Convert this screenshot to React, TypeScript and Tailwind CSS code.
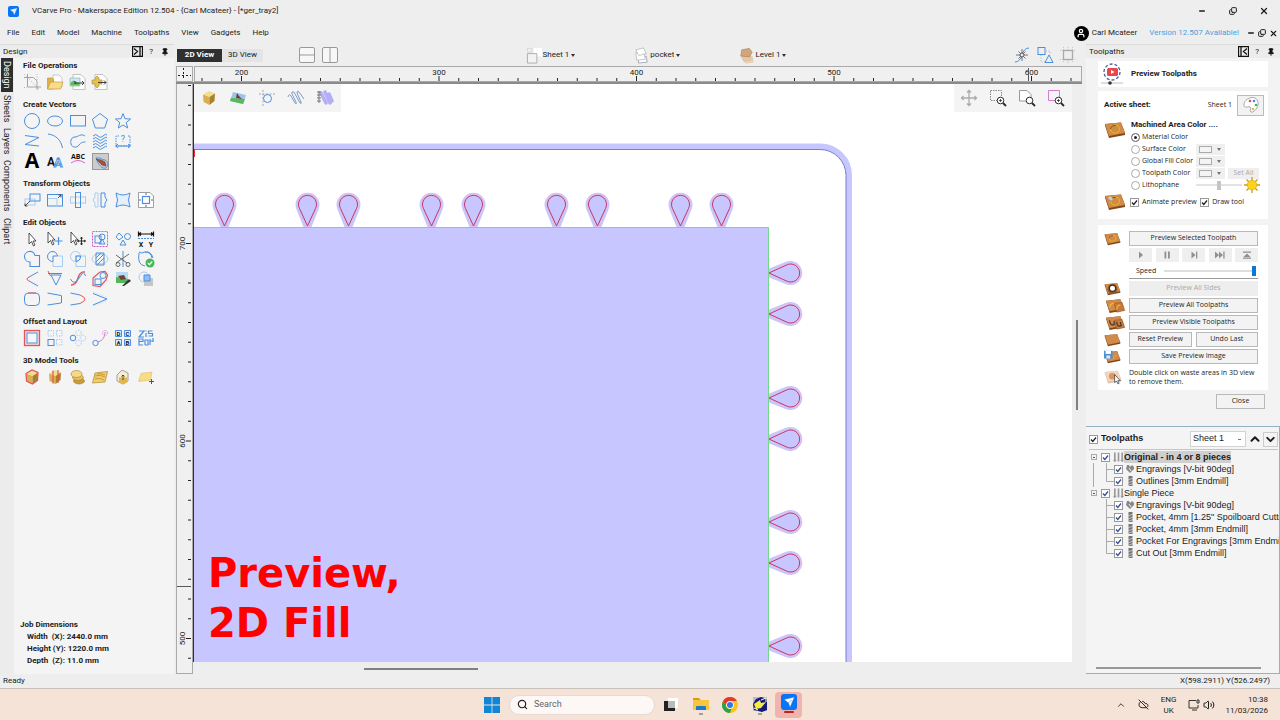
import type { ReactNode } from "react";
import { ChevronDown, ChevronUp, CloudOff, Copy, Minus, Pin, Search, User, Volume2, X } from "lucide-react";

const BLUE = "#4a8fdf";
const PALE = "#a9ccf2";
const RED = "#e0555a";
const PINK = "#d07fd4";
const INK = "#2b2b2b";
const GREY = "#9a9a9a";

type GlyphProps = { children: ReactNode; size?: string; box?: string };

function Glyph({ children, size = "size-[18px]", box = "0 0 18 18" }: GlyphProps) {
  return (
    <svg viewBox={box} className={`${size} shrink-0`} fill="none" stroke={BLUE} strokeWidth="1" aria-hidden="true">
      {children}
    </svg>
  );
}

type Tool = { label: string; art: ReactNode; active?: boolean };
type ToolGroup = { title: string; tools: Tool[] };

const sheet = <path d="M4 1.5h8l4 4v11H4z" fill="#fdfdfd" stroke="#b5b5b5" strokeWidth=".8" />;

const goldCube = (
  <g stroke="none">
    <path d="M3 5.5 9 2l6 2.5L9.500 8z" fill="#f7dc8e" />
    <path d="M3 5.500 9.500 8v8L3.500 13z" fill="#d9b04e" />
    <path d="M9.500 8 15 4.500l-.5 7.500-5 4z" fill="#a9802c" />
  </g>
);

const groups: ToolGroup[] = [
  {
    title: "File Operations",
    tools: [
      {
        label: "Job setup",
        art: (
          <g stroke={GREY}>
            <path d="M4.500 1v13H18M1 4.500h9.500l3.500 3.500v9" strokeWidth=".9" />
            <path d="M1 14.500h3M14 1v6M1 1l16 16" strokeDasharray="1 1.500" strokeWidth=".7" />
          </g>
        ),
      },
      {
        label: "Open file",
        art: (
          <g stroke="#c39a3c" strokeWidth=".7">
            <path d="M7 2h6l3 3v9H7z" fill="#fff" stroke="#b5b5b5" />
            <path d="M1.500 5h5l1 1.500V16h-6z" fill="#e0b14a" />
            <path d="m1.500 16 3-7h12.500l-2.500 7z" fill="#f9dc8a" />
          </g>
        ),
      },
      {
        label: "Import vectors",
        art: (
          <g>
            {sheet}
            <path d="M1 5h10v8H1z" fill="#cfe6f8" stroke="#8fb8a0" strokeWidth=".7" />
            <path d="M1.500 12.500v-3l3-2 6 3v2z" fill="#63b860" stroke="none" />
            <path d="M6 10h9M13 8l2 2-2 2M6 8v3" stroke={INK} strokeWidth=".9" />
          </g>
        ),
      },
      {
        label: "Export vectors",
        art: (
          <g>
            {sheet}
            <path d="M6 3 8 5v2h3v4H8v2l-2 2-2-2v-2H1V7h3V5z" fill="#e6c04e" stroke="#b8963a" strokeWidth=".7" />
            <path d="M7 9.500h8M13 7.500l2 2-2 2" stroke={INK} strokeWidth=".9" />
          </g>
        ),
      },
    ],
  },
  {
    title: "Create Vectors",
    tools: [
      { label: "Circle", art: <circle cx="9" cy="9" r="7.500" /> },
      { label: "Ellipse", art: <ellipse cx="9" cy="9" rx="7.500" ry="5" /> },
      { label: "Rectangle", art: <rect x="1.500" y="3.500" width="15" height="10.500" /> },
      { label: "Polygon", art: <path d="m9 1.500 7.500 5.700-2.800 8.800H4.300L1.500 7.200z" /> },
      { label: "Star", art: <path d="m9 1.500 2 5.200 5.600.3-4.400 3.500 1.500 5.500L9 13l-4.700 3 1.500-5.500L1.400 7 7 6.700z" /> },
      { label: "", art: null },
      { label: "Polyline", art: <path d="M2 3.500 16 5.500 2 12.500l14 1.500" /> },
      { label: "Arc", art: <path d="M2 2c8 1 13 6 14.500 14" /> },
      { label: "Curve", art: <path d="M16 4C12 1 9 5 6 5S1 8 2 12s6 4 8 1 5-3 6.500-3" /> },
      {
        label: "Texture",
        art: (
          <path d="M2 4q3-3 5 0t5 0 4-1M2 7q3-3 5 0t5 0 4-1M2 10q3-3 5 0t5 0 4-1M2 13q3-3 5 0t5 0 4-1M2 16q3-3 5 0t5 0 4-1" />
        ),
      },
      {
        label: "Dimension",
        art: (
          <g>
            <path d="M5 4H2v10h14V4h-3" strokeDasharray="1.500 1" />
            <path d="M2 14h14M4 12l-2.500 2L4 16M14 12l2.500 2-2.500 2" />
            <text x="9" y="10" textAnchor="middle" className="text-[9px]" fill={BLUE} stroke="none">?</text>
          </g>
        ),
      },
      { label: "", art: null },
      {
        label: "Text",
        art: <text x="9" y="16" textAnchor="middle" className="font-['Open_Sans',sans-serif] text-[21px] font-bold" fill="#000" stroke="none">A</text>,
      },
      {
        label: "Auto layout text",
        art: (
          <g className="font-bold">
            <text x="5" y="14" textAnchor="middle" className="text-[12px]" fill="#111" stroke="none">A</text>
            <text x="12" y="15" textAnchor="middle" className="text-[13px]" fill="#d8e9fb" strokeWidth=".8">A</text>
          </g>
        ),
      },
      {
        label: "Text on curve",
        art: (
          <g>
            <text x="9" y="7" textAnchor="middle" className="font-['Open_Sans',sans-serif] text-[7px] font-bold" fill="#111" stroke="none">ABC</text>
            <path d="M2 11q7-5 14 0" stroke="#dd62ca" />
          </g>
        ),
      },
      {
        label: "Trace bitmap",
        active: true,
        art: (
          <g>
            <path d="M3 4c4-1 6 2 9 2 4 2 3 6 1 8-5 1-6-3-8-5z" strokeWidth=".9" />
            <path d="m3 5 5 1 4 2 1 4-4-1z" fill="#a8503c" stroke="#6b3a30" strokeWidth=".6" />
          </g>
        ),
      },
    ],
  },
  {
    title: "Transform Objects",
    tools: [
      {
        label: "Move",
        art: (
          <g>
            <rect x="2" y="8" width="10" height="6" stroke={PALE} />
            <rect x="7" y="3" width="10" height="7" />
            <path d="m2 15 5-5M2 12.500V15h2.500" stroke={INK} strokeWidth=".8" />
          </g>
        ),
      },
      {
        label: "Scale",
        art: (
          <g>
            <rect x="1.500" y="3.500" width="15" height="11.500" />
            <path d="M2 7.500h9V15" stroke={PALE} />
            <path d="m12 7 3-3M12.500 4H15v2.500" stroke={INK} strokeWidth=".8" />
          </g>
        ),
      },
      {
        label: "Rotate",
        art: (
          <g>
            <rect x="1.500" y="6" width="15" height="6" stroke={PALE} />
            <rect x="6.500" y="1.500" width="5" height="15" />
          </g>
        ),
      },
      {
        label: "Mirror",
        art: (
          <g>
            <path d="M7 2H4v4L2 9l2 3v4h3z" stroke={PALE} />
            <path d="M10 2h4v4l2 3-2 3v4h-4z" />
          </g>
        ),
      },
      { label: "Distort", art: <path d="M2 2q7 4 14 0-3 7 0 14-7-4-14 0 3-7 0-14z" fill="#e3effb" /> },
      {
        label: "Align",
        art: (
          <g>
            <path d="M1.500 1.500H13l3.500 3.500v11.500h-15z" fill="#fff" stroke="#888" strokeWidth=".8" />
            <rect x="5.500" y="5.500" width="7" height="7" strokeWidth="1.200" />
            <path d="M9 2v2M9 14v2M2 9h2M14 9h2" stroke="#666" />
          </g>
        ),
      },
    ],
  },
  {
    title: "Edit Objects",
    tools: [
      { label: "Select", art: <path d="M6 3v11l2.500-2.500L10.500 16l1.500-1-2-4h3z" fill="#fff" stroke={INK} strokeWidth=".8" /> },
      {
        label: "Node edit",
        art: (
          <g>
            <path d="M2 2v11l2.500-2.500L6.500 15 8 14l-2-4h3z" fill="#fff" stroke={INK} strokeWidth=".8" />
            <path d="M12.500 7v8M8.500 11h8" strokeWidth="1.200" />
          </g>
        ),
      },
      {
        label: "Interactive select",
        art: (
          <g stroke={INK}>
            <path d="M2 2v11l2.500-2.500L6.500 15 8 14l-2-4h3z" fill="#fff" strokeWidth=".8" />
            <path d="M12.500 7v8M8.500 11h8M11.500 8.500l1-1.500 1 1.500M11.500 13.500l1 1.500 1-1.500M10 10l-1.500 1 1.500 1M15 10l1.500 1-1.500 1" />
          </g>
        ),
      },
      {
        label: "Group",
        art: (
          <g>
            <rect x="1.500" y="1.500" width="15" height="15" stroke="#d15cc8" strokeDasharray="2 1" />
            <rect x="4" y="6" width="6" height="7" />
            <circle cx="11" cy="7" r="3" />
            <path d="m11 9 3 5H8z" />
          </g>
        ),
      },
      {
        label: "Ungroup",
        art: (
          <g>
            <path d="m5 3 4 4-4 3-3-3z" />
            <circle cx="13.500" cy="6.500" r="3" />
            <path d="m9 10 3 5H6z" />
          </g>
        ),
      },
      {
        label: "Measure",
        art: (
          <g>
            <path d="M1.500 1.500v5M16.500 1.500v5M2 4h14M4 2.500 2 4l2 1.500M14 2.500 16 4l-2 1.500" stroke="#111" strokeWidth="1.200" />
            <path d="M1 8.500h16" strokeDasharray="2 1" />
            <text x="4" y="16.500" textAnchor="middle" className="text-[7px] font-bold" fill="#111" stroke="none">X</text>
            <text x="14" y="16.500" textAnchor="middle" className="text-[7px] font-bold" fill="#111" stroke="none">Y</text>
          </g>
        ),
      },
      { label: "Weld", art: <path d="M7 12a5.300 5.300 0 1 1 5-6.500h4.500v11H7z" strokeWidth="1.100" /> },
      {
        label: "Subtract",
        art: (
          <g>
            <path d="M7 11.500a5 5 0 1 1 4.500-5.500H7z" />
            <path d="M12 6h4.500v10.500H7v-5" stroke={PALE} />
          </g>
        ),
      },
      {
        label: "Overlap",
        art: (
          <g>
            <circle cx="6.500" cy="6.500" r="5" stroke={PALE} />
            <rect x="7" y="6" width="9.500" height="10.500" stroke={PALE} />
            <path d="M7 6h4.500q0 5-4.500 5.500z" />
          </g>
        ),
      },
      {
        label: "Trim",
        art: (
          <g>
            <ellipse cx="9" cy="9" rx="8" ry="5" stroke={PALE} />
            <path d="M5 3h8v12H5zM5 8l5-5M5 12l8-8M6 15l7-7" />
          </g>
        ),
      },
      {
        label: "Scissors",
        art: (
          <g>
            <path d="M9 1v16" />
            <path d="M2 5l11 8M2 13 15 4" stroke="#666" />
            <circle cx="14" cy="14.500" r="2" stroke="#666" />
            <circle cx="4" cy="14.500" r="2" stroke="#666" />
          </g>
        ),
      },
      {
        label: "Validate vectors",
        art: (
          <g>
            <path d="M2 2q2 2 6 0 6 0 7 6M2 3q-2 12 6 13M8 2q6-1 8 6" />
            <circle cx="13" cy="13" r="4.500" fill="#46b85c" stroke="none" />
            <path d="m10.800 13 1.700 1.700 2.800-3.200" stroke="#fff" strokeWidth="1.200" />
          </g>
        ),
      },
      {
        label: "Fillet",
        art: (
          <g>
            <path d="M15 2 7 6.500M15 16l-8-4.500" />
            <path d="M7 6.500Q1 9 7 11.500" stroke={RED} />
          </g>
        ),
      },
      {
        label: "Extend",
        art: (
          <g>
            <path d="m5 5 5 10 5-10z" />
            <path d="M2 3.500h14M2 1l2.500 5" stroke={RED} />
          </g>
        ),
      },
      {
        label: "Join curve",
        art: (
          <g>
            <path d="M2 15q5 0 7-7t7-6" stroke={RED} strokeWidth="1.400" />
            <path d="M1.500 9q3 6 7 1t5-7 3 3" />
          </g>
        ),
      },
      {
        label: "Boundary",
        art: (
          <g>
            <path d="M2 8 9 2l5-.5L16.500 5 15 10l-6 6.500-7-1z" stroke={RED} strokeWidth="1.200" />
            <rect x="4" y="9" width="6" height="5.500" />
            <circle cx="12" cy="5.500" r="3" />
          </g>
        ),
      },
      {
        label: "Edit picture",
        art: (
          <g stroke="none">
            <path d="M2 2h12v10H2z" fill="#b6dcf5" />
            <path d="M2 7l12 2v4H2z" fill="#51b757" />
            <path d="m4 6 6-1 2 4-5 1z" fill="#6d4334" />
            <path d="m8 16 7-7 2 2-7 5z" fill="#333" />
          </g>
        ),
      },
      {
        label: "Crop picture",
        art: (
          <g>
            <rect x="7" y="8" width="9" height="8" fill="#c6c6c6" stroke="none" />
            <circle cx="7" cy="7" r="5" stroke={PALE} />
            <path d="M7 5h6v6H7z" fill="#8ec0f3" />
          </g>
        ),
      },
      {
        label: "Rounded corners",
        art: (
          <g>
            <rect x="1.500" y="3" width="15" height="12.500" rx="4" />
            <path d="M5 3h8" stroke={RED} />
          </g>
        ),
      },
      {
        label: "Close with line",
        art: (
          <g>
            <path d="M1.500 3 15 5.500M1.500 15 15 13" />
            <path d="M15.500 5.500V13" stroke={RED} />
          </g>
        ),
      },
      {
        label: "Close with curve",
        art: (
          <g>
            <path d="M1.500 3 11 5M1.500 15 11 13.500" />
            <path d="M11 5q10 4 0 8.500" stroke={RED} />
          </g>
        ),
      },
      {
        label: "Join vectors",
        art: (
          <g>
            <path d="M2 3.500 16 9 2 15" />
            <path d="M2 2l14 5M2 16l14-5" stroke={PALE} strokeDasharray="1 1.500" strokeWidth=".7" />
          </g>
        ),
      },
    ],
  },
  {
    title: "Offset and Layout",
    tools: [
      {
        label: "Offset",
        art: (
          <g>
            <rect x="1.500" y="1.500" width="15" height="15" fill="#f6dcdc" stroke={RED} strokeWidth="1.300" />
            <rect x="4" y="4" width="10" height="10" fill="#f4f7fc" />
          </g>
        ),
      },
      {
        label: "Array copy",
        art: (
          <g>
            <rect x="2" y="10.500" width="6" height="6" />
            <path d="M2 1.500h5.500V7H2zM10.500 1.500H16V7h-5.500zM10.500 10.500H16V16h-5.500z" stroke={PALE} strokeDasharray="1.500 1" />
          </g>
        ),
      },
      {
        label: "Circular copy",
        art: (
          <g>
            <circle cx="4" cy="9" r="2.800" />
            <g stroke={PALE} strokeDasharray="1.500 1">
              <circle cx="9.500" cy="4" r="2.800" />
              <circle cx="14" cy="9" r="2.800" />
              <circle cx="9.500" cy="14" r="2.800" />
            </g>
          </g>
        ),
      },
      {
        label: "Copy along vectors",
        art: (
          <g>
            <circle cx="4.500" cy="14" r="2.700" />
            <path d="M7 13q7-2 7-10" stroke={PINK} />
            <circle cx="14" cy="4" r="2.500" stroke={PINK} strokeDasharray="1 1" />
          </g>
        ),
      },
      {
        label: "Plate layout",
        art: (
          <g>
            <path d="M1.500 1.500h6v6h-6zM10.500 1.500h6v6h-6zM1.500 10.500h6v6h-6zM10.500 10.500h6v6h-6z" fill="#dcecfb" />
            <g className="text-[6px] font-bold" fill="#222" stroke="none" textAnchor="middle">
              <text x="4.500" y="6.700">D</text>
              <text x="13.500" y="6.700">C</text>
              <text x="4.500" y="15.700">A</text>
              <text x="13.500" y="15.700">B</text>
            </g>
          </g>
        ),
      },
      {
        label: "Nesting",
        art: (
          <path
            strokeWidth="1.200"
            d="M2 2h5L2 8h5M9 4v4M9 1.500v1M15.500 2h-4v2.500h4V7h-4M2 12.500h4V10H2v6h4M8 16v-5h3v5h-3M13 10v6M13 12h3M16 9v4"
          />
        ),
      },
    ],
  },
  {
    title: "3D Model Tools",
    tools: [
      { label: "Create shape", art: <g>{goldCube}<path d="M3 5.500 9 2l6 2.500-.5 8-5 3.500-6-3z" stroke={RED} strokeWidth="1.200" /></g> },
      { label: "Two rail sweep", art: <g>{goldCube}<path d="M7 2.500v13M12 2v13" stroke={RED} strokeWidth="1.200" /></g> },
      {
        label: "Extrude and weave",
        art: (
          <g stroke="#a37c2c" strokeWidth=".6" fill="#e5bf5b">
            <ellipse cx="10" cy="13" rx="5.500" ry="3" fill="#c89b3c" />
            <ellipse cx="9" cy="9.500" rx="5.500" ry="3" />
            <ellipse cx="7.500" cy="6" rx="5.500" ry="3.500" fill="#f5d988" />
          </g>
        ),
      },
      {
        label: "Texture area",
        art: <path d="M4 5 16.500 3.500 14 14 1.500 15zM4 8q5-2 10 1M4 11q5-2 9 1M6 6q4-1 8 1" fill="#f2cd68" stroke="#ad8531" strokeWidth=".7" />,
      },
      {
        label: "Import model",
        art: (
          <g stroke="#8f8f8f" strokeWidth=".8">
            <path d="M3 7 8 2l6 3v8l-5 3-6-3z" fill="#f6edcf" />
            <path d="M5 9.500h8v5l-4 2-4-2z" fill="#e0b64f" stroke="none" />
            <path d="M9 7v5M7.500 8.500 9 7l1.500 1.500" stroke={INK} />
          </g>
        ),
      },
      {
        label: "Zero plane",
        art: (
          <g>
            <path d="M4 5.500 15 4l-1.500 8L1.500 13.500z" fill="#f8dd88" stroke="#e0bb58" strokeWidth=".6" />
            <path d="M14.500 11v5M12 13.500h5" stroke="#555" />
          </g>
        ),
      },
    ],
  },
];

const canvasTools: Tool[] = [
  { label: "Toggle model", art: goldCube },
  {
    label: "Toggle bitmaps",
    art: (
      <g stroke="none">
        <path d="M4 3 17 6l-3 9L1 12z" fill="#9dc4ec" />
        <path d="m2 9 14 1-2 5-13-3z" fill="#55bb58" />
        <path d="m8 4 2 3 3 3-6-1z" fill="#713b37" />
      </g>
    ),
  },
  {
    label: "Toggle guides",
    art: (
      <g>
        <path d="M1 5h16M5 1v16" stroke="#888" strokeDasharray="2 1.500" strokeWidth=".7" />
        <circle cx="9.500" cy="9.500" r="4" />
      </g>
    ),
  },
  {
    label: "Toggle toolpaths",
    art: <path d="M1 8q1-4 3-1l4 7q2 2 1-1L5 5q-1-3 2-2l6 11q2 1 1-1L10 4q0-3 2-1l5 7" stroke="#7f9cc4" />,
  },
  {
    label: "Toggle solid toolpaths",
    art: (
      <g>
        <path d="M5 4l5 10M9 3l5 11M13 5l3 7" stroke="#b3aef5" strokeWidth="3.500" strokeLinecap="round" />
        <path d="M3 2v12M1 3h4M1 6h4M1 9h4M1 12h4" stroke="#777" />
      </g>
    ),
  },
];

const lens = (
  <g stroke={INK}>
    <circle cx="11.500" cy="11.500" r="3.300" fill="#fff" />
    <path d="m14 14 3 3" strokeWidth="1.800" />
  </g>
);

const zoomTools: Tool[] = [
  {
    label: "Pan",
    art: <path d="M9 1.500v15M1.500 9h15M7 3.500l2-2 2 2M7 14.500l2 2 2-2M3.500 7l-2 2 2 2M14.500 7l2 2-2 2" stroke="#ababab" strokeWidth="1.300" />,
  },
  { label: "Zoom to selection", art: <g><path d="M1.500 1.500h11v10h-11z" stroke="#888" strokeDasharray="1.500 1" />{lens}<path d="M10 11.500h3M11.500 10v3" stroke={INK} strokeWidth=".8" /></g> },
  { label: "Zoom to page", art: <g><path d="M1.500 1.500H9l4 4v6.500H1.500z" fill="#fff" stroke="#999" />{lens}</g> },
  { label: "Zoom to box", art: <g><path d="M1.500 1.500h11v10h-11z" stroke="#d57ccf" />{lens}<path d="M10 11.500h3M11.500 10v3" stroke={INK} strokeWidth=".8" /></g> },
];

const snapTools: Tool[] = [
  { label: "Snap to vectors", art: <g><path d="M2 16q5 0 7-7t7-7" /><path d="M9 3v12M3 9h12M5.500 5.500l7 7M12.500 5.500l-7 7" stroke="#555" strokeWidth=".8" /><circle cx="9" cy="9" r="2" fill="#eee" stroke="#555" /></g> },
  { label: "Smart snapping", art: <g><rect x="2" y="1.500" width="7" height="7" /><path d="m13 9 4 7.500H9z" /><path d="M5 9v7h4M10 5h4v4" stroke="#999" strokeDasharray="1 1.500" strokeWidth=".7" /></g> },
  { label: "Snap to grid", art: <g stroke="#aaa"><rect x="4.500" y="4.500" width="9" height="9" strokeWidth="1.300" /><path d="M1 4.500h16M1 13.500h16M4.500 1v16M13.500 1v16M9 1v3M9 14v3" strokeDasharray="1 1" strokeWidth=".6" /></g> },
];

function ToolButton({ tool, className = "" }: { tool: Tool; className?: string }) {
  return (
    <button aria-label={tool.label} title={tool.label} className={`grid place-items-center ${className}`}>
      <Glyph>{tool.art}</Glyph>
    </button>
  );
}

function AppMark({ className }: { className: string }) {
  return (
    <svg viewBox="0 0 16 16" className={className} aria-hidden="true">
      <rect width="16" height="16" rx="3" fill="#0b74f5" />
      <path d="M3 5.500 13.500 3 9 13.500 7.500 9zM7.500 9l3-3" fill="#fff" stroke="#0b74f5" strokeWidth=".5" />
    </svg>
  );
}

function TitleBar() {
  return (
    <header className="flex h-[22px] shrink-0 items-center pl-2 pr-2">
      <AppMark className="size-[11px]" />
      <h1 className="ml-[13px] text-[8px]">VCarve Pro - Makerspace Edition 12.504 - {"{Carl Mcateer}"} - [*ger_tray2]</h1>
      <div className="ml-auto flex items-center gap-[15px]">
        <button aria-label="Minimize" className="grid w-4 place-items-center"><Minus className="size-2" strokeWidth={4} /></button>
        <button aria-label="Restore" className="grid w-4 place-items-center"><Copy className="size-2 -scale-x-100 rotate-180" strokeWidth={3} /></button>
        <button aria-label="Close window" className="grid w-4 place-items-center"><X className="size-[10px]" strokeWidth={3} /></button>
      </div>
    </header>
  );
}

const menus = ["File", "Edit", "Model", "Machine", "Toolpaths", "View", "Gadgets", "Help"];

function MenuBar() {
  return (
    <div className="flex h-[22px] shrink-0 items-center pl-[7px] pr-[2px] text-[8px]">
      <nav className="flex gap-3" aria-label="Main menu">
        {menus.map((m) => <button key={m}>{m}</button>)}
      </nav>
      <span className="ml-auto grid size-[15px] place-items-center rounded-full bg-black text-white">
        <User className="size-[10px]" strokeWidth={3} />
      </span>
      <span className="ml-[3px]">Carl Mcateer</span>
      <a href="#update" className="ml-3 text-[#4a9fdc]">Version 12.507 Available!</a>
      <div className="ml-2 flex items-center gap-[3px]">
        <button aria-label="Minimize document"><Minus className="size-2" strokeWidth={4} /></button>
        <button aria-label="Restore document"><Copy className="size-2 -scale-x-100 rotate-180" strokeWidth={3} /></button>
        <button aria-label="Close document"><X className="size-[9px]" strokeWidth={3} /></button>
      </div>
    </div>
  );
}

function PanelHeader({ title, flip }: { title: string; flip?: boolean }) {
  return (
    <div className="flex h-[14px] shrink-0 items-center border-t border-[#dcdcdc] bg-[#ececec] pl-[3px] pr-[5px] text-[8px]">
      <h2>{title}</h2>
      <button aria-label={`Dock ${title}`} className="ml-auto">
        <Glyph size={flip ? "size-[11px] -scale-x-100" : "size-[11px]"} box="0 0 11 11">
          <path d="M.5.500h10v10H.5zM8 1v9M2 2.500l3.500 3L2 8.500" stroke="#111" strokeWidth="1.300" />
        </Glyph>
      </button>
      <button aria-label={`Help for ${title}`} className="ml-[6px]">?</button>
      <button aria-label={`Pin ${title}`} className="ml-2"><Pin className="size-2" strokeWidth={3} fill="#111" /></button>
    </div>
  );
}

const sideTabs = ["Design", "Sheets", "Layers", "Components", "Clipart"];

function DesignPanel() {
  return (
    <aside className="flex w-[174px] shrink-0 flex-col bg-[#f4f4f4]">
      <PanelHeader title="Design" />
      <div className="flex flex-1">
        <div className="flex w-[14px] shrink-0 flex-col items-center bg-[#ececec]" role="tablist">
          {sideTabs.map((t, i) => (
            <button
              key={t}
              role="tab"
              aria-selected={i === 0}
              className="grid w-3 shrink-0 place-items-center py-[3px] aria-selected:bg-[#2f2f2f] aria-selected:text-white"
            >
              <span className="block text-[9px] leading-3 [writing-mode:vertical-rl]">{t}</span>
            </button>
          ))}
        </div>
        <div className="flex flex-1 flex-col pb-[7px] pt-[1px]">
          {groups.map((g) => (
            <section key={g.title} className="mb-[6px] pl-[7px]">
              <h3 className="pl-[2px] text-[8px] font-bold leading-[13px]">{g.title}</h3>
              <div className="grid w-[136px] grid-cols-6">
                {g.tools.map((t, i) =>
                  t.art ? (
                    <span key={t.label} className="grid h-5 place-items-center">
                      <ToolButton tool={t} className={t.active ? "size-[17px] border border-[#999] bg-[#ccc]" : ""} />
                    </span>
                  ) : (
                    <span key={`gap-${i}`} />
                  ),
                )}
              </div>
            </section>
          ))}
          <dl className="mt-auto pl-[13px] text-[8px] font-bold leading-3">
            <dt className="-ml-[7px]">Job Dimensions</dt>
            <dd>Width&nbsp; (X): 2440.0 mm</dd>
            <dd>Height (Y): 1220.0 mm</dd>
            <dd>Depth&nbsp; (Z): 11.0 mm</dd>
          </dl>
        </div>
      </div>
    </aside>
  );
}

function MiniSelect({ label, value, icon }: { label: string; value: string; icon: ReactNode }) {
  return (
    <label className="flex items-center">
      <Glyph size="size-[17px]">{icon}</Glyph>
      <select aria-label={label} className="field-sizing-content appearance-none bg-transparent text-[8px]">
        <option>{value}</option>
      </select>
      <svg viewBox="0 0 4 3" className="ml-[2px] h-[3px] w-1" aria-hidden="true"><path d="M0 0h4L2 3z" fill="#333" /></svg>
    </label>
  );
}

function ViewBar() {
  return (
    <div className="flex h-[22px] items-center pl-[1px] text-[8px]">
      <button className="h-[13px] w-[45px] bg-[#303030] font-bold text-white">2D View</button>
      <button className="h-[13px] w-[41px] bg-[#e4e4e4]">3D View</button>
      <div className="ml-[35px] flex gap-[5px]">
        <button aria-label="Split horizontally">
          <Glyph><path d="M1.500 3q0-1.500 1.500-1.500h12q1.500 0 1.500 1.500v12q0 1.500-1.500 1.500H3q-1.500 0-1.500-1.500zM1.500 9h15" fill="#f7f7f7" stroke="#999" /></Glyph>
        </button>
        <button aria-label="Split vertically">
          <Glyph><path d="M1.500 3q0-1.500 1.500-1.500h12q1.500 0 1.500 1.500v12q0 1.500-1.500 1.500H3q-1.500 0-1.500-1.500zM9 1.500v15" fill="#f7f7f7" stroke="#999" /></Glyph>
        </button>
      </div>
      <div className="flex grow items-center justify-center gap-[58px]">
        <MiniSelect label="Sheet" value="Sheet 1" icon={<g><path d="M8 1h9v9H8z" fill="#fff" stroke="none" /><path d="M1.500 1.500h5v4h-5z" stroke="#ccc" strokeWidth=".6" /><path d="M1.500 7h10v10h-10z" fill="#f3f3f3" stroke="#aaa" /></g>} />
        <MiniSelect label="Layer" value="pocket" icon={<g stroke="#aaa" strokeWidth=".7"><path d="m5 9 9 1 1 6-9 1z" fill="#fff" stroke="#7c8aa0" /><path d="m3 6 9 1 1 6-9 1z" fill="#fff" /><path d="m3 3 8-2 3 6-8 2z" fill="#fff" /></g>} />
        <MiniSelect label="Level" value="Level 1" icon={<g stroke="#a9825b" strokeWidth=".7"><path d="m5 11 10-1 1 6-8 1z" fill="#ecd8c2" stroke="#dcc0a0" /><path d="m3 9 10-1 1 6-8 1z" fill="#e6c8a8" stroke="#dcb890" /><path d="M4 3 12 1.500l3 4-3 5-9-1z" fill="#d2a679" /></g>} />
      </div>
      <div className="flex gap-[5px] pl-[40px] pr-[5px]">
        {snapTools.map((t) => <ToolButton key={t.label} tool={t} />)}
      </div>
    </div>
  );
}

const STEP = 19.75;

function TopRuler() {
  const ticks = Array.from({ length: 45 }, (_, i) => i - 2);
  return (
    <svg className="h-full w-full" aria-hidden="true">
      {ticks.map((i) => (
        <path key={i} d={`M${46.5 + i * STEP} ${i % 10 === 0 ? 9 : 11}V14`} stroke="#222" />
      ))}
      {[200, 300, 400, 500, 600].map((n, i) => (
        <text key={n} x={46.5 + i * 10 * STEP} y="8" textAnchor="middle" className="text-[8px]" fill="#222">{n}</text>
      ))}
      <path d="M833.500 1V14" stroke="#555" />
    </svg>
  );
}

function SideRuler() {
  const ticks = Array.from({ length: 30 }, (_, i) => i - 8);
  return (
    <svg className="h-full w-full" aria-hidden="true">
      {ticks.map((i) => (
        <path key={i} d={`M${i % 10 === 0 ? 9 : 11} ${159.5 + i * STEP}H14`} stroke="#222" />
      ))}
      {[700, 600, 500].map((n, i) => {
        const y = 159.5 + i * 10 * STEP;
        return (
          <text key={n} x="8" y={y} transform={`rotate(-90 8 ${y})`} textAnchor="middle" className="text-[8px]" fill="#222">{n}</text>
        );
      })}
      <path d="M0 502.500H14" stroke="#555" />
    </svg>
  );
}

const topPegs = [30, 113, 154, 237, 279, 362, 403, 486, 527];
const rightPegs = [189, 230, 314, 355, 438, 479, 562];

function Peg({ x, y, turn }: { x: number; y: number; turn: number }) {
  return (
    <g transform={`translate(${x} ${y}) rotate(${turn})`}>
      <path d="M-4 0-11.200-18A12 12 0 1 1 11.200-18L4 0z" fill="#c8c6ff" />
      <path d="M0-1-7.800-18.500A9 9 0 1 1 7.800-18.500z" fill="none" stroke="#dcbfec" strokeWidth="3" />
      <path d="M0-1-8-18.500A9 9 0 1 1 8-18.500z" fill="#c8c6ff" stroke="#c03a68" strokeWidth="1" />
    </g>
  );
}

function Canvas() {
  return (
    <div className="relative min-w-0 flex-1 overflow-hidden border-l border-[#2d2d45] bg-white">
      <svg className="absolute inset-0 h-full w-full" role="img" aria-label="Tray drawing">
        <path d="M0 62.500H626A29 29 0 0 1 655 91.500V2000" fill="none" stroke="#c8c6ff" strokeWidth="6" />
        <path d="M0 65.500H626A26 26 0 0 1 652 91.500V2000" fill="none" stroke="#7480cf" />
        {topPegs.map((x) => <Peg key={x} x={x + 0.5} y={143} turn={0} />)}
        {rightPegs.map((y) => <Peg key={y} x={574} y={y} turn={90} />)}
        <path d="M-5 143.500H574.500V2000H-5z" fill="#c8c6ff" stroke="#74d98c" />
        <path d="M0 65v8" stroke="#d33" strokeWidth="2" />
      </svg>
      <div className="absolute left-0 top-0 flex h-7 items-center gap-[11px] bg-[#f4f4f4] pl-[6px] pr-[7px]">
        {canvasTools.map((t) => <ToolButton key={t.label} tool={t} />)}
      </div>
      <div className="absolute right-0 top-0 flex h-7 items-center gap-[11px] bg-[#f4f4f4] pl-[6px] pr-[7px]">
        {zoomTools.map((t) => <ToolButton key={t.label} tool={t} />)}
      </div>
      <p className="absolute bottom-[14px] left-[14px] font-['DejaVu_Sans',sans-serif] text-[40px] font-bold leading-[50px] text-[#ff0000]">
        Preview,
        <br />
        2D Fill
      </p>
    </div>
  );
}

function Workspace() {
  return (
    <main className="flex min-w-0 flex-1 flex-col pl-[2px] pr-[4px]">
      <ViewBar />
      <div className="flex h-4 shrink-0 gap-[1px]">
        <div className="w-[17px] border border-[#aaa] bg-[#f2f2f2]">
          <svg viewBox="0 0 15 14" className="h-full w-full" aria-hidden="true"><path d="M6.500 1v12M1 8.500h13" stroke="#222" strokeDasharray="2 2" /></svg>
        </div>
        <div className="flex-1 border border-[#aaa] bg-[#f0f0f0]"><TopRuler /></div>
      </div>
      <div className="flex min-h-0 flex-1 border-t-2 border-[#8b8b8b]">
        <div className="w-[17px] shrink-0 border border-t-0 border-[#aaa] bg-[#f0f0f0]"><SideRuler /></div>
        <div className="flex min-w-0 flex-1 flex-col">
          <div className="flex flex-1">
            <Canvas />
            <div className="flex w-[10px] justify-center pt-[236px]"><div className="h-[90px] w-[2px] bg-[#808080]" /></div>
          </div>
          <div className="h-3 pl-[171px] pt-[6px]"><div className="h-[2px] w-[114px] bg-[#808080]" /></div>
        </div>
      </div>
    </main>
  );
}

type BoardMark = "ring" | "cut" | "plain" | "double" | "arcs" | "save" | "hit" | "sides";

function Board({ mark, size = "h-[18px] w-[22px]" }: { mark: BoardMark; size?: string }) {
  const two = mark === "double" || mark === "arcs";
  return (
    <svg viewBox="0 0 22 18" className={size} fill="none" aria-hidden="true">
      <g opacity={mark === "hit" ? 0.35 : 1}>
        <path d="M1 3 17 1.500 21 12v2L5 17 1 4.500z" fill="#83451b" />
        <path d="M1 3 17 1.500 21 12 5 15z" fill="#d08a49" />
      </g>
      {two && <path d="m10 6 9-1 3 9-9 2z" fill="#c47a38" stroke="#83451b" strokeWidth=".5" />}
      {(mark === "ring" || mark === "cut") && <ellipse cx="11" cy="8" rx="4.500" ry="4" stroke="#e9b21c" strokeWidth="1.200" />}
      {(mark === "ring" || mark === "cut") && <path d="M6.500 8q1-4 5-3.500" stroke="#7d4215" />}
      {mark === "cut" && <path d="m5 4 3 3" stroke="#ccc" strokeWidth="3" />}
      {mark === "double" && <path d="M5 11q0-5 5-5M13 13q0-5 4-5" stroke="#f0b92a" strokeWidth="1.300" />}
      {mark === "arcs" && <path d="M5 6q0 6 5 5V7M13 8q0 6 5 4l-1-4" stroke="#3a2e2a" strokeWidth="1.200" />}
      {mark === "sides" && <g><circle cx="11" cy="9" r="6.500" fill="#8b5a35" /><circle cx="11" cy="8" r="4" fill="#fff" stroke="#4d2d18" strokeWidth="1.500" /></g>}
      {mark === "save" && <g><path d="M0 1h11v10H0z" fill="#4b8fd6" /><path d="M2 1h7v4H2z" fill="#fff" /><path d="M3 7h5v4H3z" fill="#dde8f4" /><path d="M12 12q0-5 4-5" stroke="#f0b92a" /></g>}
      {mark === "hit" && <g><circle cx="10" cy="8" r="4" fill="#e0955a" /><path d="M13 6v10l2.300-2 1.700 3.500 1.500-.8-1.600-3.200H20z" fill="#fff" stroke="#222" strokeWidth=".8" /></g>}
    </svg>
  );
}

function Tick({ label, tone = "dark", children }: { label: string; tone?: "dark" | "blue"; children?: ReactNode }) {
  return (
    <label className="flex items-center gap-[3px] whitespace-nowrap">
      <span className="grid">
        <input
          type="checkbox"
          defaultChecked
          aria-label={label}
          className="peer col-start-1 row-start-1 size-[9px] appearance-none border border-[#999] bg-white"
        />
        <svg viewBox="0 0 9 9" className="pointer-events-none col-start-1 row-start-1 hidden size-[9px] peer-checked:block" aria-hidden="true">
          <path d="m2 4.500 1.800 2L7 2.500" fill="none" stroke={tone === "blue" ? "#33508f" : "#222"} strokeWidth="1.300" />
        </svg>
      </span>
      {children}
    </label>
  );
}

function Swatch({ label }: { label: string }) {
  return (
    <button aria-label={label} className="flex h-[11px] w-[29px] items-center justify-between bg-[#efefef] pl-[3px] pr-1">
      <span className="h-[7px] w-[13px] border border-[#aaa] bg-[#f4f4f4]" />
      <svg viewBox="0 0 4 3" className="h-[3px] w-1" aria-hidden="true"><path d="M0 0h4L2 3z" fill="#777" /></svg>
    </button>
  );
}

const fills = ["Material Color", "Surface Color", "Global Fill Color", "Toolpath Color", "Lithophane"];
const wide = "h-[15px] w-full border border-[#b9b9b9] bg-[#f3f3f3] disabled:border-transparent disabled:bg-[#eee] disabled:text-[#a9a9a9]";

const playIcons = [
  { label: "Play", d: "M3 1.500v7l4-3.500z" },
  { label: "Pause", d: "M2.500 1.500h1.800v7H2.500zM6 1.500h1.800v7H6z" },
  { label: "Step", d: "M2.500 1.500v7l4-3.500zM7 1.500h1.300v7H7z" },
  { label: "Skip to end", d: "M0 1.500v7l4-3.500zM4 1.500v7l4-3.500zM8.300 1.500h1.300v7H8.300z" },
  { label: "Retract", d: "M1 1.500h8v1.300H1zM5 3.500 8.500 7h-7zM1 7.500h8v1.300H1z" },
];

function ColorCard() {
  return (
    <section className="flex flex-col bg-white px-[6px] pb-[8px] pt-[3px]">
      <div className="flex h-[22px] items-center">
        <h3 className="font-['Roboto',sans-serif] text-[8px] font-bold">Active sheet:</h3>
        <span className="ml-auto">Sheet 1</span>
        <button aria-label="Choose material" className="ml-[5px] mr-[-2px] grid h-[21px] w-[27px] place-items-center border border-[#bbb] bg-[#f2f2f2]">
          <Glyph>
            <path d="M8 2c5-2 9 2 8 7-1 4-5 8-7 7s1-4-1-5-6 2-6-2 3-6 6-7z" fill="#fff" stroke="#888" strokeWidth=".7" />
            <g stroke="none"><circle cx="8" cy="5" r="1.300" fill="#e05050" /><circle cx="12" cy="5" r="1.300" fill="#4a8fdf" /><circle cx="14" cy="9" r="1.300" fill="#47ad62" /><circle cx="11" cy="13" r="1.300" fill="#e3c03b" /></g>
          </Glyph>
        </button>
      </div>
      <div className="mt-[3px] flex">
        <div className="w-[27px] shrink-0 pt-[2px]"><Board mark="ring" /></div>
        <fieldset className="min-w-0 flex-1">
          <legend className="font-['Roboto',sans-serif] text-[8px] font-bold leading-3">Machined Area Color ....</legend>
          {fills.map((f, i) => (
            <div key={f} className="flex h-3 items-center">
              <label className="flex w-[65px] shrink-0 items-center gap-[2px] whitespace-nowrap">
                <input
                  type="radio"
                  name="fill"
                  defaultChecked={i === 0}
                  className="size-[9px] shrink-0 appearance-none rounded-full border border-[#aaa] bg-white checked:border-[#888] checked:bg-[#222] checked:shadow-[inset_0_0_0_2px_#fff]"
                />
                {f}
              </label>
              {i > 0 && i < 4 && <Swatch label={`${f} swatch`} />}
              {i === 3 && <button disabled className="ml-[3px] h-[11px] w-[31px] bg-[#efefef] text-[#aaa]">Set All</button>}
              {i === 4 && (
                <>
                  <input
                    type="range"
                    aria-label="Lithophane brightness"
                    defaultValue={50}
                    className="h-[10px] w-[46px] appearance-none bg-[linear-gradient(#e3e3e3,#e3e3e3)] bg-[length:100%_2px] bg-center bg-no-repeat [&::-webkit-slider-thumb]:h-[9px] [&::-webkit-slider-thumb]:w-1 [&::-webkit-slider-thumb]:appearance-none [&::-webkit-slider-thumb]:bg-[#c4c4c4]"
                  />
                  <svg viewBox="0 0 16 16" className="ml-[2px] size-4 shrink-0" aria-hidden="true">
                    <path d="M8 0v16M0 8h16M2.500 2.500l11 11M13.500 2.500l-11 11" stroke="#c79a16" strokeWidth="1.300" />
                    <circle cx="8" cy="8" r="4.800" fill="#ffd21c" stroke="#d5a215" strokeWidth=".6" />
                  </svg>
                </>
              )}
            </div>
          ))}
        </fieldset>
      </div>
      <div className="mt-[2px] flex items-center">
        <div className="w-[26px]"><Board mark="cut" /></div>
        <Tick label="Animate preview">Animate preview</Tick>
        <span className="ml-auto mr-[18px]"><Tick label="Draw tool">Draw tool</Tick></span>
      </div>
    </section>
  );
}

function ActionRow({ mark, children }: { mark: BoardMark; children: ReactNode }) {
  return (
    <div className="flex items-center">
      <div className="-my-1 w-[25px] shrink-0"><Board mark={mark} size={mark === "double" || mark === "arcs" ? "h-[16px] w-[22px]" : "h-[16px] w-[17px]"} /></div>
      <div className="flex min-w-0 flex-1 gap-1">{children}</div>
    </div>
  );
}

function PlaybackCard() {
  return (
    <section className="mt-[6px] flex flex-col gap-[2px] bg-white pb-1 pl-[6px] pr-[10px] pt-[6px]">
      <ActionRow mark="ring"><button className={wide}>Preview Selected Toolpath</button></ActionRow>
      <div className="ml-[25px] flex justify-between">
        {playIcons.map((p) => (
          <button key={p.label} aria-label={p.label} className="grid h-[14px] w-[23px] place-items-center bg-[#efefef]">
            <svg viewBox="0 0 10 10" className="size-[10px]" aria-hidden="true"><path d={p.d} fill="#8f8f8f" /></svg>
          </button>
        ))}
      </div>
      <label className="ml-[25px] flex h-[15px] items-center gap-2 border-b border-[#999] pl-[7px] pr-[2px]">
        Speed
        <input
          type="range"
          defaultValue={100}
          className="h-[10px] min-w-0 flex-1 appearance-none bg-[linear-gradient(#dedede,#dedede)] bg-[length:100%_2px] bg-center bg-no-repeat [&::-webkit-slider-thumb]:h-[10px] [&::-webkit-slider-thumb]:w-1 [&::-webkit-slider-thumb]:appearance-none [&::-webkit-slider-thumb]:bg-[#0b78d4]"
        />
      </label>
      <ActionRow mark="sides"><button disabled className={wide}>Preview All Sides</button></ActionRow>
      <ActionRow mark="double"><button className={wide}>Preview All Toolpaths</button></ActionRow>
      <ActionRow mark="arcs"><button className={wide}>Preview Visible Toolpaths</button></ActionRow>
      <ActionRow mark="plain">
        <button className={wide}>Reset Preview</button>
        <button className={wide}>Undo Last</button>
      </ActionRow>
      <ActionRow mark="save"><button className={wide}>Save Preview Image</button></ActionRow>
      <div className="mt-[2px] flex items-center">
        <div className="w-[25px] shrink-0"><Board mark="hit" size="h-[16px] w-[18px]" /></div>
        <p className="-mr-2 leading-[9px]">Double click on waste areas in 3D view<br />to remove them.</p>
      </div>
    </section>
  );
}

type Node = { name: string; kind: "group" | "vbit" | "mill"; selected?: boolean };

const tree: Node[] = [
  { name: "Original - in 4 or 8 pieces", kind: "group", selected: true },
  { name: "Engravings [V-bit 90deg]", kind: "vbit" },
  { name: "Outlines [3mm Endmill]", kind: "mill" },
  { name: "Single Piece", kind: "group" },
  { name: "Engravings [V-bit 90deg]", kind: "vbit" },
  { name: "Pocket, 4mm [1.25\" Spoilboard Cutter]", kind: "mill" },
  { name: "Pocket, 4mm [3mm Endmill]", kind: "mill" },
  { name: "Pocket For Engravings [3mm Endmill]", kind: "mill" },
  { name: "Cut Out [3mm Endmill]", kind: "mill" },
];

function NodeIcon({ kind }: { kind: Node["kind"] }) {
  if (kind === "group")
    return (
      <svg viewBox="0 0 12 10" className="h-[10px] w-[11px]" aria-hidden="true"><path d="M2 0v10M6 0v10M10 0v10" stroke="#999" strokeWidth="1.800" /><path d="M0 8l2 2 2-2M8 8l2 2 2-2" stroke="#888" fill="none" strokeWidth=".7" /></svg>
    );
  if (kind === "vbit")
    return (
      <svg viewBox="1 0 8 10" className="h-[10px] w-2" aria-hidden="true"><path d="M2 1h2l1 2 2-2 2 2v2L5 9 1 5z" fill="#888" /><path d="m4 4 2 3" stroke="#f4f4f4" /></svg>
    );
  return (
    <svg viewBox="1 0 8 10" className="h-[10px] w-2" aria-hidden="true"><path d="M3.500 0h4v10h-4z" fill="#777" /><path d="m3 4 5-2M3 7l5-2M3 9.500l5-2" stroke="#ddd" strokeWidth=".7" /></svg>
  );
}

function ToolpathTree() {
  return (
    <section className="flex min-h-0 flex-1 flex-col overflow-hidden border-y border-r border-[#93b0c4] bg-[#f4f4f4] font-['Liberation_Sans',sans-serif] text-[9px]">
      <div className="ml-[3px] mr-[1px] mt-[3px] flex h-5 shrink-0 items-center border-b border-[#c4c4c4] pb-[1px]">
        <Tick label="All toolpaths"><span className="font-bold">Toolpaths</span></Tick>
        <select aria-label="Toolpath sheet" className="ml-auto h-4 w-[56px] appearance-none border border-[#d3d3d3] bg-white bg-[linear-gradient(#777,#777)] bg-[length:3px_1px] bg-[position:right_4px_center] bg-no-repeat pl-[2px]">
          <option>Sheet 1</option>
        </select>
        <button aria-label="Move up" className="ml-[2px]"><ChevronUp className="size-[14px]" strokeWidth={3.500} /></button>
        <button aria-label="Move down" className="ml-[1px] border border-[#ccc]"><ChevronDown className="size-[13px]" strokeWidth={3.500} /></button>
      </div>
      <ul className="mt-[1px] pl-[5px] leading-3">
        {tree.map((n, i) => (
          <li key={i} className="flex h-3 items-center whitespace-nowrap">
            {n.kind === "group" ? (
              <button aria-label={`Collapse ${n.name}`} className="mr-1 grid size-[6px] shrink-0 place-items-center border border-[#aaa]"><span className="h-[1px] w-[2px] bg-[#555]" /></button>
            ) : (
              <svg viewBox="0 0 23 12" className="h-3 w-[23px] shrink-0" aria-hidden="true">
                {i < 3 && <path d="M2.500 0v12" stroke="#aaa" />}
                <path d={i === 2 || i === 8 ? "M15.500 0v6.500H23" : "M15.500 0v12M15.500 6.500H23"} stroke="#aaa" fill="none" />
              </svg>
            )}
            <Tick label={`${n.name} ${i}`} tone="blue">
              <span className={n.kind === "group" ? "-mr-[1px]" : "pr-[1px]"}><NodeIcon kind={n.kind} /></span>
            </Tick>
            <span className={n.selected ? "ml-[1px] bg-[#cfcfcf] font-bold" : "ml-[1px]"}>{n.name}</span>
          </li>
        ))}
      </ul>
      <div className="mt-auto h-[6px] shrink-0 pl-[10px] pr-[18px]"><div className="h-[2px] bg-[#999]" /></div>
    </section>
  );
}

function ToolpathPanel() {
  return (
    <aside className="flex w-[194px] shrink-0 flex-col bg-[#f3f3f3]">
      <PanelHeader title="Toolpaths" flip />
      <div className="flex flex-col px-3 pb-[17px] pt-[3px] font-['Open_Sans','Noto_Sans',sans-serif] text-[7px]">
        <div className="mb-1 flex h-[26px] items-center gap-2 bg-white pl-[3px]">
          <Glyph size="size-[22px]" box="0 0 22 22">
            <circle cx="11" cy="9" r="8" stroke="#4a5f8f" strokeWidth="1.300" strokeDasharray="3 2" />
            <rect x="6" y="5" width="11" height="8" rx="1.500" fill="#e8474c" stroke="none" />
            <path d="m10 7 3.500 2-3.500 2z" fill="#fff" stroke="none" />
            <path d="M0 20h22" stroke="#bbb" />
            <circle cx="9" cy="20" r="1.800" fill="#333" stroke="none" />
          </Glyph>
          <h3 className="font-['Roboto',sans-serif] text-[8px] font-bold">Preview Toolpaths</h3>
        </div>
        <ColorCard />
        <PlaybackCard />
        <button className="mr-[3px] mt-1 h-[15px] w-[49px] self-end border border-[#b9b9b9] bg-[#f3f3f3]">Close</button>
      </div>
      <ToolpathTree />
    </aside>
  );
}

function Taskbar() {
  return (
    <footer className="grid h-8 shrink-0 grid-cols-[1fr_auto_1fr] items-center border-t border-[#c9c0b9] bg-[#f5e3d7]">
      <span />
      <div className="flex items-center pl-[6px]">
        <button aria-label="Start" className="mr-[9px]">
          <svg viewBox="0 0 16 16" className="size-4"><path d="M0 0h7.600v7.600H0zM8.400 0H16v7.600H8.400zM0 8.400h7.600V16H0zM8.400 8.400H16V16H8.400z" fill="#0f86d8" /></svg>
        </button>
        <label className="flex h-5 w-[146px] items-center gap-[6px] rounded-full border border-[#e6dad2] bg-[#fdf8f5] px-[7px]">
          <Search className="size-[11px]" strokeWidth={2.500} />
          <input type="search" placeholder="Search" className="min-w-0 flex-1 bg-transparent text-[9px] outline-none placeholder:text-[#666]" />
        </label>
        <button aria-label="Task view" className="ml-[1px] grid w-[30px] place-items-center">
          <svg viewBox="0 0 16 16" className="size-4"><path d="M5 1h10v10H5z" fill="#fff" /><path d="M1 4h4v7h7v3H1z" fill="#222" /><path d="M5 4h7v7H5z" fill="#bbb" /></svg>
        </button>
        <button aria-label="File Explorer" className="grid w-[29px] place-items-center">
          <svg viewBox="0 0 18 20" className="h-5 w-[18px]"><path d="M1 3h6l2 2h8v10H1z" fill="#f8c63e" /><path d="M1 3h6l1 2H1z" fill="#d79a1d" /><path d="M5 11h8q1 0 1 1v3H4v-3q0-1 1-1z" fill="#1d79c9" /><path d="M7 19h4" stroke="#888" strokeWidth="1.500" /></svg>
        </button>
        <button aria-label="Chrome" className="grid w-[30px] place-items-center">
          <svg viewBox="0 0 16 16" className="size-4">
            <circle cx="8" cy="8" r="8" fill="#f9c51c" />
            <path d="M1.070 4A8 8 0 0 1 14.930 4H8a4 4 0 0 0-3.460 6z" fill="#e2382d" />
            <path d="M1.070 4 4.540 10a4 4 0 0 0 5 1.700L8 16A8 8 0 0 1 1.070 4z" fill="#2e9f4d" />
            <circle cx="8" cy="8" r="3.800" fill="#fff" />
            <circle cx="8" cy="8" r="3" fill="#2f78e6" />
          </svg>
        </button>
        <button aria-label="Paint tool" className="grid w-[30px] place-items-center">
          <svg viewBox="0 0 18 20" className="h-5 w-[18px]"><path d="M2 2h14v14H2z" fill="#b9bcc4" /><path d="m2 9 3-5 5-2 6 2v11l-5 2-8-2z" fill="#141a7c" /><path d="m3 9 6-4 1 3 5-1-5 6-5 1z" fill="#f7ec3b" /><path d="m10 5 5-2v4M3 13l4 2" stroke="#fff" fill="none" /><path d="M7 19h4" stroke="#888" strokeWidth="1.500" /></svg>
        </button>
        <button aria-label="VCarve Pro" className="grid h-[26px] w-[27px] place-items-center rounded bg-[#f0b3ae]">
          <AppMark className="size-4" />
          <span className="-mt-[6px] h-[2px] w-[10px] rounded bg-[#b3261e]" />
        </button>
      </div>
      <div className="flex items-center justify-end pr-3 text-[8px] leading-[11px]">
        <ChevronUp className="size-[10px]" />
        <CloudOff className="ml-3 size-[11px]" />
        <p className="ml-3 text-center leading-[11px]">ENG<br />UK</p>
        <svg viewBox="0 0 12 12" className="ml-3 size-3" fill="none" stroke="#333" aria-hidden="true"><path d="M8 1.500H1v7.500h9V6M4 11h5M9 1h2v3H9z" /></svg>
        <Volume2 className="ml-[3px] size-3" />
        <p className="ml-[10px] text-right">10:38<br />11/03/2026</p>
      </div>
    </footer>
  );
}

export default function App() {
  return (
    <div className="flex h-screen flex-col overflow-hidden bg-[#eeeeee] font-['Roboto','Noto_Sans',sans-serif] text-[#1c1c1c]">
      <TitleBar />
      <MenuBar />
      <div className="flex min-h-0 flex-1">
        <DesignPanel />
        <Workspace />
        <ToolpathPanel />
      </div>
      <div className="flex h-[14px] shrink-0 items-center justify-between pl-[3px] pr-[10px] text-[8px]">
        <span>Ready</span>
        <span>X(598.2911) Y(526.2497)</span>
      </div>
      <Taskbar />
    </div>
  );
}
